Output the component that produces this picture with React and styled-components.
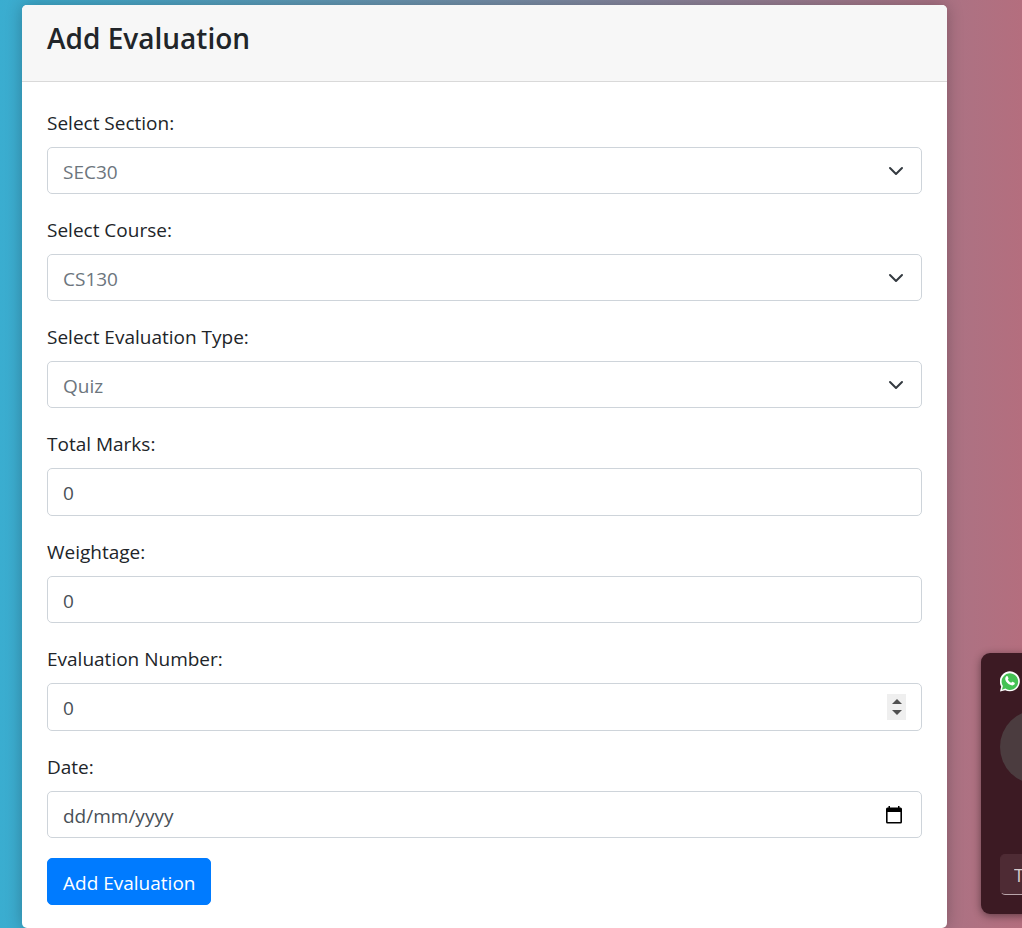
import React, { useState } from "react";
import styled, { createGlobalStyle } from "styled-components";

const GlobalStyle = createGlobalStyle`
  *, *::before, *::after { box-sizing: border-box; }
  body {
    margin: 0;
    font-family: "Segoe UI", "Open Sans", "Noto Sans", sans-serif;
    font-size: 19px;
    line-height: 28px;
    color: #212529;
  }
  button, input, select { font: inherit; margin: 0; }
`;

const Page = styled.main`
  min-height: 100vh;
  padding: 5px 75px 0 22px;
  overflow: hidden;
  background: linear-gradient(90deg, #3aadd0, #b46e7e);
`;

const Card = styled.section`
  background: #fff;
  border-radius: 5px;
  box-shadow: 0 0 16px rgba(0, 0, 0, 0.25);
`;

const CardHeader = styled.header`
  padding: 14px 25px 23px;
  background: #f7f7f7;
  border-bottom: 1px solid #d9d9d9;
  border-radius: 5px 5px 0 0;
`;

const Title = styled.h1`
  margin: 0;
  font-size: 28px;
  font-weight: 600;
  line-height: 39px;
`;

const Form = styled.form`
  display: flex;
  flex-direction: column;
  align-items: flex-start;
  gap: 20px;
  padding: 25px 25px 23px;
`;

const Field = styled.div`
  display: flex;
  flex-direction: column;
  gap: 10px;
  width: 100%;
`;

const Label = styled.label`
  display: block;
  padding-top: 2px;
`;

const ControlWrap = styled.div`
  display: grid;
  align-items: center;
  > * { grid-area: 1 / 1; }
`;

const Input = styled.input`
  width: 100%;
  height: ${(p) => (p.type === "number" ? 48 : 47)}px;
  padding: 2px 15px 0;
  border: 1px solid #ced4da;
  border-radius: 5px;
  background: #fff;
  color: #495057;
  appearance: textfield;
  &::placeholder { color: #495057; opacity: 1; }
  &::-webkit-inner-spin-button { appearance: none; margin: 0; }
`;

const Select = styled.select`
  width: 100%;
  height: 47px;
  padding: 2px 45px 0 15px;
  border: 1px solid #ced4da;
  border-radius: 5px;
  background: #fff;
  color: #6c757d;
  appearance: none;
`;

const SelectIcon = styled.svg`
  justify-self: end;
  margin-right: 18px;
  pointer-events: none;
`;

const Stepper = styled.div`
  justify-self: end;
  display: flex;
  flex-direction: column;
  justify-content: center;
  width: 19px;
  height: 26px;
  margin-right: 16px;
  background: #efefef;
`;

const StepButton = styled.button`
  display: flex;
  align-items: center;
  justify-content: center;
  height: 11px;
  padding: 0;
  border: 0;
  background: none;
  color: #505050;
`;

const PickerButton = styled.button`
  justify-self: end;
  display: flex;
  padding: 0;
  margin-right: 19px;
  border: 0;
  background: none;
  color: #000;
`;

const SubmitButton = styled.button`
  height: 47px;
  padding: 2px 15px 0;
  border: 1px solid #007bff;
  border-radius: 5px;
  background: #007bff;
  color: #fff;
`;

const Notification = styled.aside`
  position: fixed;
  left: calc(100% - 41px);
  bottom: 14px;
  display: flex;
  flex-direction: column;
  align-items: flex-start;
  width: 450px;
  height: 261px;
  padding: 18px 19px 19px;
  border-radius: 9px;
  background: #3c1a23;
  box-shadow: 0 2px 8px rgba(0, 0, 0, 0.45);
`;

const Avatar = styled.div`
  width: 74px;
  height: 74px;
  margin-top: 18px;
  border-radius: 50%;
  background: #4b3c3f;
`;

const Reply = styled.input`
  width: 100%;
  height: 41px;
  margin-top: auto;
  padding: 0 13px;
  border: 1px solid #4e2b34;
  border-bottom-color: #b9a5aa;
  border-radius: 5px;
  background: #4e2b34;
  color: #fff;
  font-size: 18px;
  &::placeholder { color: #d5cacd; opacity: 1; }
`;

function WhatsAppLogo() {
  return (
    <svg width="20" height="21" viewBox="0 0 20 21" aria-label="WhatsApp" role="img">
      <path fill="#fff" d="M0 20.6 1.2 15.4A10 10 0 1 1 5.2 19.2Z" />
      <path fill="#45c254" d="M1.9 18.7 2.9 15.1A8.3 8.3 0 1 1 5.4 17.6Z" />
      <path
        fill="#fff"
        d="M6.4 5.3c.5-.5 1-.4 1.3.1l.8 1.8c.1.4-.1.7-.7 1.4.8 1.6 1.8 2.5 3.5 3.2.7-.8.9-1.2 1.3-1l1.9.9c.5.3.3 1.3-.2 1.9-.9.9-2.2 1-3.5.5C8 13.1 6.3 11.3 5.4 8.9 5 7.5 5.4 6.1 6.4 5.3Z"
      />
    </svg>
  );
}

function SelectField({ id, label, option }) {
  return (
    <Field>
      <Label htmlFor={id}>{label}</Label>
      <ControlWrap>
        <Select id={id}>
          <option>{option}</option>
        </Select>
        <SelectIcon width="16" height="16" viewBox="0 0 16 16" fill="none" aria-hidden="true">
          <path d="m2 5 6 6 6-6" stroke="#343a40" strokeWidth="2" strokeLinecap="round" strokeLinejoin="round" />
        </SelectIcon>
      </ControlWrap>
    </Field>
  );
}

export default function App() {
  const [number, setNumber] = useState(0);
  return (
    <Page>
      <GlobalStyle />
      <Card>
        <CardHeader>
          <Title>Add Evaluation</Title>
        </CardHeader>
        <Form onSubmit={(e) => e.preventDefault()}>
          <SelectField id="section" label="Select Section:" option="SEC30" />
          <SelectField id="course" label="Select Course:" option="CS130" />
          <SelectField id="type" label="Select Evaluation Type:" option="Quiz" />
          <Field>
            <Label htmlFor="marks">Total Marks:</Label>
            <Input id="marks" type="number" defaultValue="0" />
          </Field>
          <Field>
            <Label htmlFor="weightage">Weightage:</Label>
            <Input id="weightage" type="text" inputMode="decimal" defaultValue="0" />
          </Field>
          <Field>
            <Label htmlFor="number">Evaluation Number:</Label>
            <ControlWrap>
              <Input
                id="number"
                type="number"
                value={number}
                onChange={(e) => setNumber(Number(e.target.value))}
              />
              <Stepper>
                <StepButton type="button" aria-label="Increase" onClick={() => setNumber(number + 1)}>
                  <svg width="10" height="5" viewBox="0 0 10 5" aria-hidden="true">
                    <path d="M0 5 5 0 10 5Z" fill="currentColor" />
                  </svg>
                </StepButton>
                <StepButton type="button" aria-label="Decrease" onClick={() => setNumber(number - 1)}>
                  <svg width="10" height="5" viewBox="0 0 10 5" aria-hidden="true">
                    <path d="M0 0h10L5 5Z" fill="currentColor" />
                  </svg>
                </StepButton>
              </Stepper>
            </ControlWrap>
          </Field>
          <Field>
            <Label htmlFor="date">Date:</Label>
            <ControlWrap>
              <Input id="date" type="text" placeholder="dd/mm/yyyy" />
              <PickerButton type="button" aria-label="Choose date">
                <svg width="18" height="18" viewBox="0 0 18 18" aria-hidden="true">
                  <path
                    fill="currentColor"
                    fillRule="evenodd"
                    d="M3.5 0h1.5v1.5h8V0h1.5v1.5H15.5q1.5 0 1.5 1.5v13q0 1.5-1.5 1.5H2.5q-1.5 0-1.5-1.5V3q0-1.5 1.5-1.5h1ZM2.6 6v10h12.8V6Z"
                  />
                </svg>
              </PickerButton>
            </ControlWrap>
          </Field>
          <SubmitButton type="submit">Add Evaluation</SubmitButton>
        </Form>
      </Card>
      <Notification>
        <WhatsAppLogo />
        <Avatar />
        <Reply aria-label="Reply" placeholder="Type a reply" />
      </Notification>
    </Page>
  );
}
